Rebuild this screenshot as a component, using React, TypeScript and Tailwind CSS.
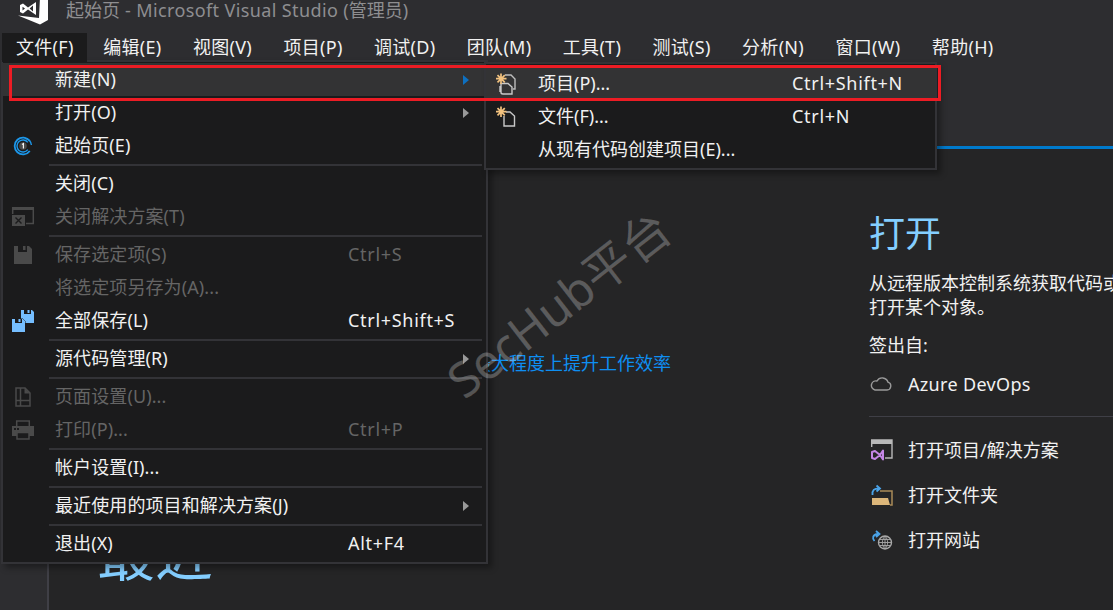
import React from 'react';

const FONT = "font-['Noto_Sans','Noto_Sans_CJK_SC',sans-serif]";

const topMenus = ['文件(F)', '编辑(E)', '视图(V)', '项目(P)', '调试(D)', '团队(M)', '工具(T)', '测试(S)', '分析(N)', '窗口(W)', '帮助(H)'];

function VsLogo() {
  return (
    <svg width="30" height="25" viewBox="0 0 30 25" className="shrink-0">
      <path d="M22 -3 L30 0 V20 L22 24.5 L0 15.5 L21 18 Z" fill="#fff" />
      <path d="M2 5 L5 3.5 L10 7.5 L18 2 V15 L10 9.5 L5 13.5 L2 12 Z M4.5 6.8 V10.4 L7 8.6 Z M15 5.6 L11.6 8.5 L15 11.4 Z" fill="#fff" fillRule="evenodd" />
    </svg>
  );
}

function StartIcon() {
  return (
    <svg width="20" height="20" viewBox="0 0 20 20" fill="none" stroke="#1c97ea">
      <path d="M16.8 5 A8.4 8.4 0 1 0 16.8 15" strokeWidth="1.8" />
      <path d="M14.8 6.4 A6 6 0 1 0 14.8 13.6" strokeWidth="1.4" />
      <path d="M12 2.2 A8 8 0 0 1 18.4 9" strokeWidth="1.4" />
      <circle cx="10" cy="10" r="3.8" fill="#4a4a4a" stroke="none" />
      <path d="M9 8.6 L10.4 7.6 V12.4" stroke="#f1f1f1" strokeWidth="1.2" />
    </svg>
  );
}

function CloseSolutionIcon() {
  return (
    <svg width="24" height="22" viewBox="0 0 24 22" fill="none">
      <path d="M1.7 8 V1.7 H22.3 V17.5 H15" stroke="#4a4a4a" strokeWidth="1.5" />
      <rect x="1" y="1" width="22" height="3" fill="#4a4a4a" />
      <rect x="1" y="9" width="13" height="11" fill="#4a4a4a" />
      <path d="M4.5 11.5 L10.5 17.5 M10.5 11.5 L4.5 17.5" stroke="#1b1b1c" strokeWidth="1.4" />
    </svg>
  );
}

function SaveIcon() {
  return (
    <svg width="20" height="20" viewBox="0 0 20 20">
      <path d="M1 1 H16 L19 4 V19 H1 Z" fill="#4a4a4a" />
      <rect x="5" y="1" width="9" height="6" fill="#1b1b1c" />
      <rect x="10" y="1" width="2.5" height="4" fill="#4a4a4a" />
    </svg>
  );
}

function Floppy({ x, y }: { x: number; y: number }) {
  return (
    <g transform={`translate(${x} ${y})`}>
      <path d="M0 0 H11 L13 2 V13 H0 Z" fill="#75beff" stroke="#1b1b1c" strokeWidth="1" paintOrder="stroke" />
      <rect x="3" y="0" width="7" height="4" fill="#1b1b1c" />
      <rect x="6.5" y="0" width="2" height="3" fill="#75beff" />
    </g>
  );
}

function SaveAllIcon() {
  return (
    <svg width="24" height="24" viewBox="0 0 24 24">
      <Floppy x={10} y={1} />
      <Floppy x={1} y={10} />
    </svg>
  );
}

function PageIcon() {
  return (
    <svg width="18" height="20" viewBox="0 0 18 20" fill="none" stroke="#4a4a4a" strokeWidth="1.5">
      <path d="M2 1 H11 L16 6 V19 H2 Z M6.5 1 V19 M2 13.5 H16" />
      <path d="M10.5 1 L16 6.5 H10.5 Z" fill="#4a4a4a" stroke="none" />
    </svg>
  );
}

function PrintIcon() {
  return (
    <svg width="22" height="20" viewBox="0 0 22 20">
      <path d="M4.7 7 V1 H17.3 V7" fill="none" stroke="#4a4a4a" strokeWidth="1.5" />
      <path d="M0 6 H22 V16 H0 Z" fill="#4a4a4a" />
      <rect x="2" y="8" width="2" height="2" fill="#1b1b1c" />
      <rect x="5" y="8" width="2" height="2" fill="#1b1b1c" />
      <rect x="5" y="12.5" width="12" height="6.5" fill="#1b1b1c" stroke="#4a4a4a" strokeWidth="1.5" />
    </svg>
  );
}

function NewProjectIcon() {
  return (
    <svg width="20" height="22" viewBox="0 0 20 22" fill="none">
      <path d="M9 2 H15 L19 6 V16 H17" stroke="#bdbdbd" strokeWidth="1.4" />
      <path d="M4 13 V19 M5 10.5 H12 L16 14 V21 H7 C6 21 5 20.5 5 19.5 Z" stroke="#c8c8c8" strokeWidth="1.4" />
      <path d="M5 0.5 V11 M0 5.7 H10.5 M1.5 2.2 L8.8 9.4 M8.8 2.2 L1.5 9.4" stroke="#f2c27f" strokeWidth="1.7" />
    </svg>
  );
}

function NewFileIcon() {
  return (
    <svg width="20" height="22" viewBox="0 0 20 22" fill="none">
      <path d="M10 6 H14 L18.5 10 V20 H8 V10" stroke="#c8c8c8" strokeWidth="1.4" />
      <path d="M5 0.5 V11 M0 5.7 H10.5 M1.5 2.2 L8.8 9.4 M8.8 2.2 L1.5 9.4" stroke="#f2c27f" strokeWidth="1.7" />
    </svg>
  );
}

function CloudIcon() {
  return (
    <svg width="22" height="14" viewBox="0 0 22 14" fill="none" stroke="#9a9a9a" strokeWidth="1.4">
      <path d="M5 13 H17 A4 4 0 0 0 18 5.2 A6 6 0 0 0 7 4 A4.6 4.6 0 0 0 5 13 Z" />
    </svg>
  );
}

function OpenProjectIcon() {
  return (
    <svg width="23" height="22" viewBox="0 0 23 22" fill="none">
      <path d="M1.7 8 V1 H22 V19 H15" stroke="#b8b8b8" strokeWidth="1.4" />
      <rect x="2" y="1" width="20" height="4" fill="#b8b8b8" />
      <path d="M2 13 L5 12 L10 16 L13 11.5 V20.5 L10 16 L5 20 L2 19 Z" stroke="#c586e6" strokeWidth="2" strokeLinejoin="round" />
    </svg>
  );
}

function OpenFolderIcon() {
  return (
    <svg width="23" height="22" viewBox="0 0 23 22" fill="none">
      <path d="M10 7 H22 V21 H20" stroke="#a98a58" strokeWidth="1.5" />
      <path d="M2 14 H18 L20 21 H2 Z" fill="#dcb67a" />
      <path d="M2.5 11 C2 6 4 4.5 9 4.5 M6.5 1.5 L10 4.5 L6.5 7.5" stroke="#4aa3e8" strokeWidth="1.8" />
    </svg>
  );
}

function OpenWebIcon() {
  return (
    <svg width="23" height="20" viewBox="0 0 23 20" fill="none">
      <circle cx="15" cy="12.5" r="6.5" stroke="#a8a8a8" strokeWidth="1.4" />
      <path d="M8.5 12.5 H21.5 M15 6 V19 M9.5 9.5 H20.5 M9.5 15.5 H20.5 M15 6 C11.5 9.5 11.5 15.5 15 19 M15 6 C18.5 9.5 18.5 15.5 15 19" stroke="#a8a8a8" strokeWidth="0.9" />
      <path d="M4.5 11 C2 8 2.5 4.5 8 4 M6 1 L9.5 4 L6 7" stroke="#4aa3e8" strokeWidth="1.8" />
    </svg>
  );
}

type Row = { label: string; shortcut?: string; icon?: React.ReactNode; disabled?: boolean; arrow?: boolean; active?: boolean; sep?: boolean };

const fileRows: Row[] = [
  { label: '新建(N)', arrow: true, active: true },
  { label: '打开(O)', arrow: true },
  { label: '起始页(E)', icon: <StartIcon /> },
  { label: '', sep: true },
  { label: '关闭(C)' },
  { label: '关闭解决方案(T)', icon: <CloseSolutionIcon />, disabled: true },
  { label: '', sep: true },
  { label: '保存选定项(S)', shortcut: 'Ctrl+S', icon: <SaveIcon />, disabled: true },
  { label: '将选定项另存为(A)...', disabled: true },
  { label: '全部保存(L)', shortcut: 'Ctrl+Shift+S', icon: <SaveAllIcon /> },
  { label: '', sep: true },
  { label: '源代码管理(R)', arrow: true },
  { label: '', sep: true },
  { label: '页面设置(U)...', icon: <PageIcon />, disabled: true },
  { label: '打印(P)...', shortcut: 'Ctrl+P', icon: <PrintIcon />, disabled: true },
  { label: '', sep: true },
  { label: '帐户设置(I)...' },
  { label: '', sep: true },
  { label: '最近使用的项目和解决方案(J)', arrow: true },
  { label: '', sep: true },
  { label: '退出(X)', shortcut: 'Alt+F4' },
];

const subRows: Row[] = [
  { label: '项目(P)...', shortcut: 'Ctrl+Shift+N', icon: <NewProjectIcon />, active: true },
  { label: '文件(F)...', shortcut: 'Ctrl+N', icon: <NewFileIcon /> },
  { label: '从现有代码创建项目(E)...' },
];

const openLinks = [
  { label: '打开项目/解决方案', icon: <OpenProjectIcon /> },
  { label: '打开文件夹', icon: <OpenFolderIcon /> },
  { label: '打开网站', icon: <OpenWebIcon /> },
];

export default function App() {
  return (
    <div className={`relative w-[1113px] h-[610px] overflow-hidden bg-[#2d2d30] text-[18px] text-[#f1f1f1] ${FONT}`}>
      {/* 标题栏 */}
      <div className="h-[33px] flex items-start pl-[18px] gap-[18px] overflow-hidden">
        <VsLogo />
        <span className="text-[#8e8e90] leading-[21px] whitespace-nowrap">
          起始页<span className="tracking-[0.38px]"> - Microsoft Visual Studio </span>(管理员)
        </span>
      </div>

      {/* 菜单栏 */}
      <div className="flex h-[28px] -ml-[1.5px]">
        {topMenus.map((m) => (
          <div key={m} className="h-[28px] px-[15.7px] leading-[28px] tracking-[0.3px] whitespace-nowrap">{m}</div>
        ))}
      </div>

      {/* 内容 */}
      <div className="flex h-[549px]">
        <div className="w-[49px] shrink-0 bg-[#2d2d30] border-r-2 border-[#3f3f46]" />
        <div className="flex-1 bg-[#252526] min-w-0">
          <div className="h-[85px] bg-[#2d2d30]" />
          <div className="h-[3px] bg-[#007acc]" />
          <div className="flex">
            <div className="w-[820px] shrink-0 pl-[51px]">
              <div className="pt-[202px] pl-[373px] text-[#0e8ff2] leading-[24px] whitespace-nowrap">最大程度上提升工作效率</div>
              <div className="pt-[147px] -ml-[3px] text-[58px] leading-[64px] text-[#84ceff]">最近</div>
            </div>
            <div className="flex-1 min-w-0 whitespace-nowrap">
              <div className="pt-[61px] text-[36px] leading-[48px] text-[#84ceff]">打开</div>
              <div className="mt-[13px] leading-[24px]">从远程版本控制系统获取代码或</div>
              <div className="leading-[24px]">打开某个对象。</div>
              <div className="mt-[14px] leading-[24px]">签出自:</div>
              <div className="mt-[15px] flex items-center h-[24px]">
                <div className="w-[39px] pl-[1px]"><CloudIcon /></div>
                <span className="tracking-[0.33px]">Azure DevOps</span>
              </div>
              <div className="mt-[20px] border-t border-[#3f3f46]" />
              <div className="mt-[21px] flex flex-col gap-[21px]">
                {openLinks.map((l) => (
                  <div key={l.label} className="flex items-center h-[24px]">
                    <div className="w-[39px] pl-[1px] flex">{l.icon}</div>
                    {l.label}
                  </div>
                ))}
              </div>
            </div>
          </div>
        </div>
      </div>

      {/* 文件菜单 */}
      <div className="absolute left-[1px] top-[60px] w-[487px] h-[504px] bg-[#1b1b1c] border-2 border-[#333337] pt-[1px] shadow-[4px_4px_6px_rgba(0,0,0,0.35)]">
        {fileRows.map((r, i) =>
          r.sep ? (
            <div key={i} className="h-[5px] ml-[46px] mr-[4px] flex items-center"><div className="h-[2px] w-full bg-[#333337]" /></div>
          ) : (
            <div key={r.label} className={`flex items-center h-[33px] whitespace-nowrap ${r.active ? 'bg-[#333334]' : ''} ${r.disabled ? 'text-[#656565]' : ''}`}>
              <div className="w-[52px] pl-[8px] pr-[20px] h-full flex items-center justify-center shrink-0">{r.icon}</div>
              <div className="w-[293px] shrink-0 tracking-[0.1px]">{r.label}</div>
              <div className="w-[115px] shrink-0 tracking-[0.7px]">{r.shortcut}</div>
              {r.arrow && <div className={`w-0 h-0 border-y-[5px] border-y-transparent border-l-[6px] ${r.active ? 'border-l-[#0e70c0]' : 'border-l-[#999999]'}`} />}
            </div>
          )
        )}
      </div>

      {/* 被激活的菜单标题，盖住下拉菜单上边框 */}
      <div className="absolute left-[2px] top-[33px] w-[85px] h-[29px] bg-[#1b1b1c] pl-[14px] leading-[28px] tracking-[0.3px] whitespace-nowrap">文件(F)</div>

      {/* 新建子菜单 */}
      <div className="absolute left-[484px] top-[62px] w-[453px] h-[108px] bg-[#1b1b1c] border-2 border-[#333337] pt-[3px] shadow-[4px_4px_6px_rgba(0,0,0,0.35)]">
        {subRows.map((r) => (
          <div key={r.label} className={`flex items-center h-[33px] whitespace-nowrap ${r.active ? 'bg-[#333334]' : ''}`}>
            <div className="w-[52px] pl-[10px] pr-[22px] h-full flex items-center justify-center shrink-0">{r.icon}</div>
            <div className="w-[254px] shrink-0">{r.label}</div>
            <div className="tracking-[0.7px]">{r.shortcut}</div>
          </div>
        ))}
      </div>

      {/* 标注框 */}
      <div className="absolute left-[9px] top-[65px] w-[932px] h-[36px] border-[3px] border-[#ed1c24]" />

      {/* 水印 */}
      <div className="absolute left-[425px] top-[276px] -rotate-[38deg] text-[48px] leading-[56px] text-white/25 whitespace-nowrap pointer-events-none">SecHub平台</div>
    </div>
  );
}
